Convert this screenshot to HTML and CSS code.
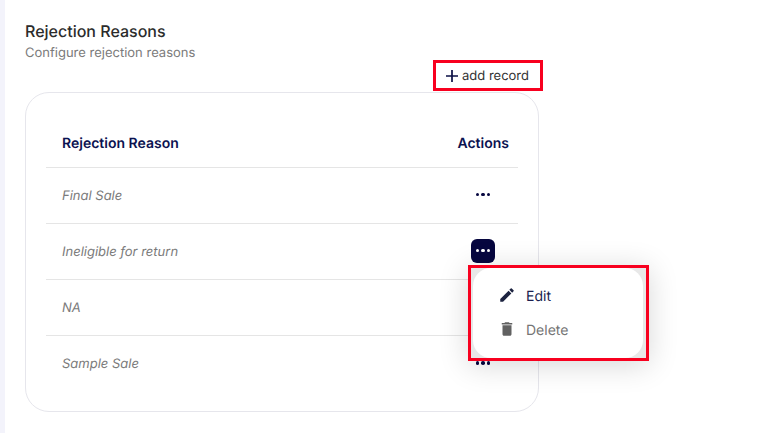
FILE: index.html
```html
<!DOCTYPE html>
<html lang="en">
<head>
<meta charset="utf-8">
<title>Rejection Reasons</title>
<link rel="stylesheet" href="styles.css">
</head>
<body>
<div class="app">
  <aside class="rail"></aside>
  <main class="main">
    <h1 class="title">Rejection Reasons</h1>
    <p class="subtitle">Configure rejection reasons</p>
    <div class="panel">
      <div class="toolbar">
        <button class="add-btn" type="button">
          <svg class="plus" width="14" height="14" viewBox="0 0 14 14"><path d="M7 1v12M1 7h12" stroke="#0b0f45" stroke-width="1.7" fill="none"/></svg>
          <span>add record</span>
        </button>
      </div>
      <section class="card">
        <div class="row head"><span>Rejection Reason</span><span>Actions</span></div>
        <div class="row"><em>Final Sale</em><span class="dots"><i></i><i></i><i></i></span></div>
        <div class="row"><em>Ineligible for return</em><span class="dots active"><i></i><i></i><i></i></span></div>
        <div class="row"><em>NA</em><span class="dots"><i></i><i></i><i></i></span></div>
        <div class="row last"><em>Sample Sale</em><span class="dots"><i></i><i></i><i></i></span></div>
      </section>
      <div class="menu-frame">
        <div class="menu">
          <div class="menu-item edit">
            <svg width="18" height="18" viewBox="0 0 24 24"><path fill="#1d2340" d="M3 17.25V21h3.75L17.81 9.94l-3.75-3.75L3 17.25zM20.71 7.04a1 1 0 0 0 0-1.41l-2.34-2.34a1 1 0 0 0-1.41 0l-1.83 1.83 3.75 3.75 1.83-1.83z"/></svg>
            <span class="label">Edit</span>
          </div>
          <div class="menu-item del">
            <svg width="18" height="18" viewBox="0 0 24 24"><path fill="#616161" d="M6 19c0 1.1.9 2 2 2h8c1.1 0 2-.9 2-2V7H6v12zM19 4h-3.5l-1-1h-5l-1 1H5v2h14V4z"/></svg>
            <span class="label">Delete</span>
          </div>
        </div>
      </div>
    </div>
  </main>
</div>
</body>
</html>
```
FILE: styles.css
```css
* { box-sizing: border-box; }
html, body { margin: 0; height: 100%; overflow: hidden; background: #fff; }
body { font-family: Inter, "Liberation Sans", sans-serif; text-rendering: geometricPrecision; }
.app { display: flex; height: 433px; }
.rail { width: 5px; background: #f3f3fb; }
.main { flex: 1; padding: 22px 0 0 20px; }
.title { margin: 0; font-size: 16px; line-height: 19px; font-weight: 500; color: #2b2b2b; }
.subtitle { margin: 4px 0 0; font-size: 13px; line-height: 16px; font-weight: 400; color: #7b7b7b; }
.panel { position: relative; width: 514px; margin-top: -1px; }
.toolbar { display: flex; justify-content: flex-end; height: 32px; margin-right: -4px; }
.add-btn { display: flex; align-items: center; justify-content: flex-start; gap: 3px; width: 110px; height: 31px; padding: 0 0 0 9px; background: #fff; border: 3px solid #f8001f; font: 400 13px Inter, sans-serif; color: #333; text-rendering: geometricPrecision; }
.card { border: 1px solid #e6e6ec; border-radius: 24px; height: 320px; padding: 26px 20px 0; background: #fff; }
.row { display: flex; align-items: center; justify-content: space-between; height: 56px; border-bottom: 1px solid #e5e5e5; padding: 0 9px 2px 16px; font-size: 13px; color: #7b7b7b; }
.row em { font-style: italic; margin-top: 2px; }
.row.last { border-bottom: 0; }
.row.head { height: 49px; font-size: 14px; font-weight: 600; color: #0b1250; padding-bottom: 0; }
.dots { display: flex; align-items: center; justify-content: center; gap: 2px; width: 24px; height: 24px; margin-right: 14px; border-radius: 6px; }
.dots i { width: 3.6px; height: 3.6px; border-radius: 50%; background: #06063f; }
.dots.active { background: #06063f; }
.dots.active i { background: #fff; }
.menu-frame { position: absolute; left: 443px; top: 205px; width: 181px; height: 96px; border: 3px solid #f8001f; background: #e8e8e8; box-shadow: 0 4px 28px rgba(0,0,0,.16); padding: 0 3px 0 2px; display: flex; }
.menu { flex: 1; background: #fff; border-radius: 18px; padding: 10px 0 0 25px; }
.menu-item { display: flex; align-items: center; gap: 10px; height: 34px; font-size: 14px; }
.label { margin-top: 2px; }
.edit { color: #1b1f50; }
.del { color: #757575; }
```
